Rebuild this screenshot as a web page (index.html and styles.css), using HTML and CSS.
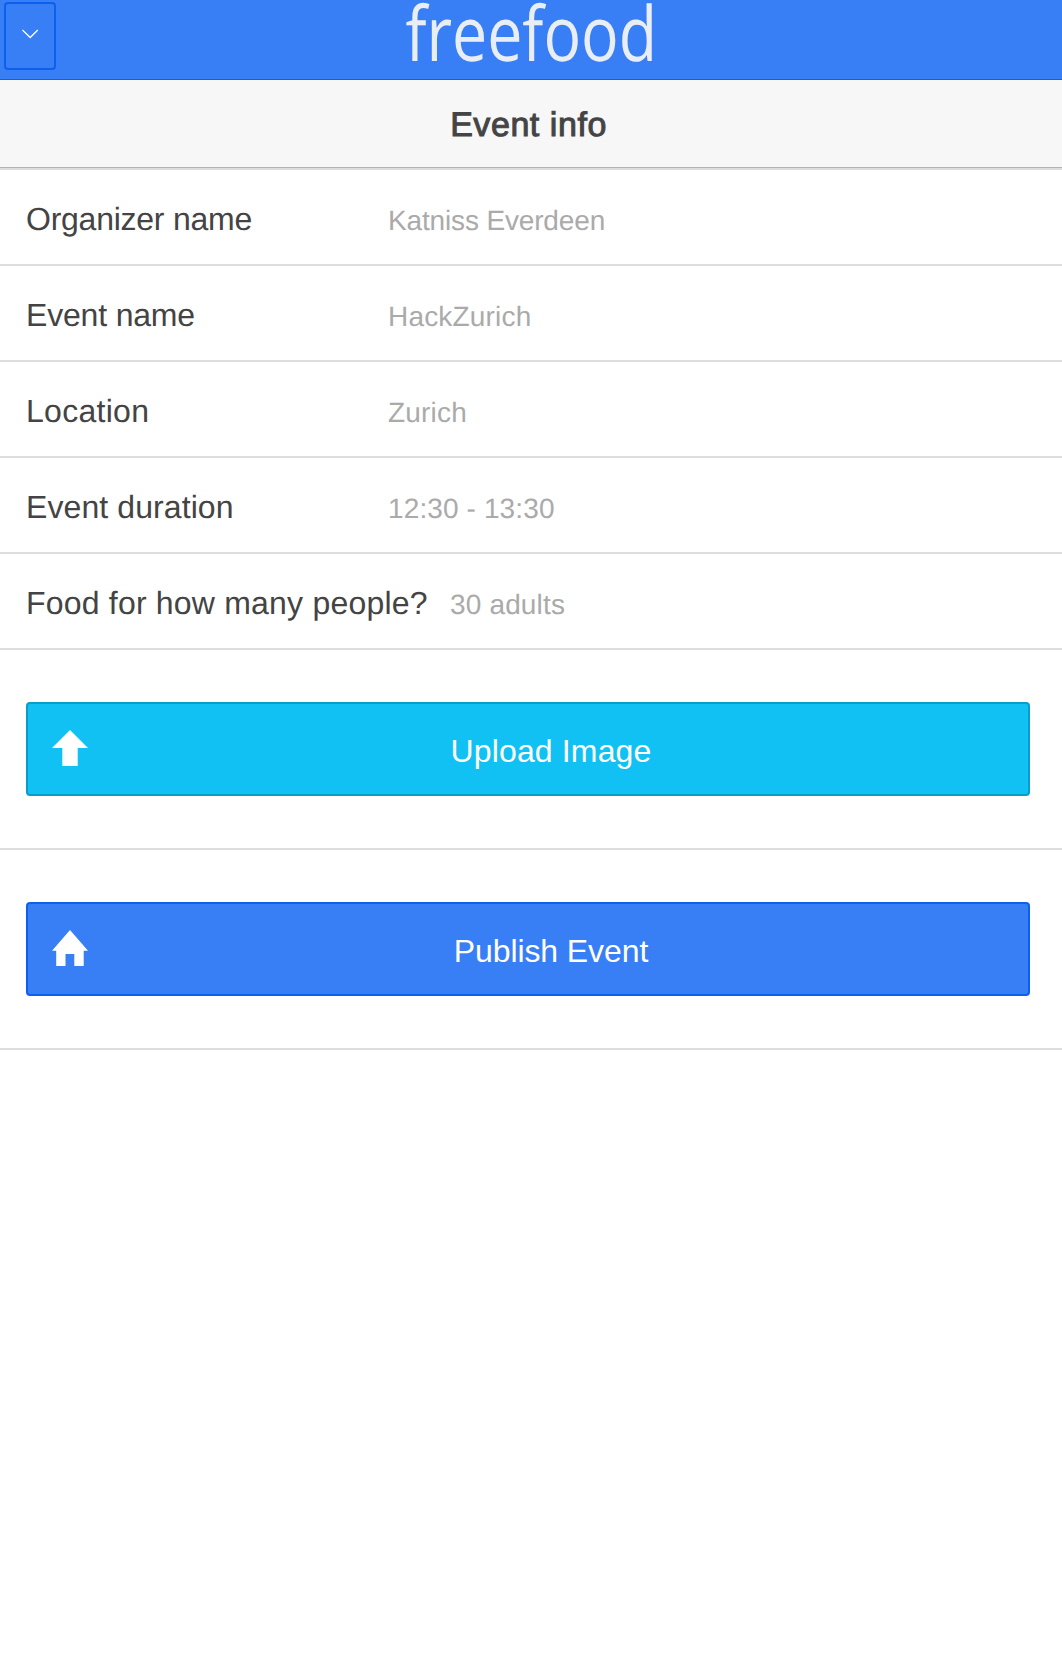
FILE: index.html
```html
<!DOCTYPE html>
<html lang="en">
<head>
<meta charset="utf-8">
<title>freefood</title>
<link rel="stylesheet" href="styles.css">
</head>
<body>
<header class="bar">
  <button class="menu" aria-label="Menu"><svg width="16" height="10" viewBox="0 0 16 10"><path d="M.4 1 8.2 8.6 15.8 1" fill="none" stroke="#fff" stroke-width="1.4"/></svg></button>
  <div class="logo">freefood</div>
</header>
<div class="subbar"><h1 class="title">Event info</h1></div>
<main class="list">
  <div class="item"><span class="label organizer">Organizer name</span><span class="value person">Katniss Everdeen</span></div>
  <div class="item"><span class="label event">Event name</span><span class="value hack">HackZurich</span></div>
  <div class="item"><span class="label location">Location</span><span class="value city">Zurich</span></div>
  <div class="item"><span class="label duration">Event duration</span><span class="value time">12:30 - 13:30</span></div>
  <div class="item"><span class="label people">Food for how many people?</span><span class="value adults">30 adults</span></div>
  <div class="action">
    <button class="button calm"><svg class="icon" width="36" height="36" viewBox="0 0 36 36"><path d="M18 0 36 18H25.7V36H10.3V18H0Z" fill="#fff"/></svg><span class="text upload">Upload Image</span></button>
  </div>
  <div class="action">
    <button class="button positive"><svg class="icon" width="36" height="36" viewBox="0 0 36 36"><path d="M18 0 36 20.7H31.7V36H22.3V24H13.5V36H4.2V20.7H0Z" fill="#fff"/></svg><span class="text publish">Publish Event</span></button>
  </div>
</main>
</body>
</html>
```
FILE: styles.css
```css
* { box-sizing: border-box; }
body {
  margin: 0;
  min-height: 1656px;
  background: #fff;
  color: #444;
  font-family: "Liberation Sans", Arial, sans-serif;
  text-rendering: geometricPrecision;
}
button { font: inherit; color: #fff; }
.bar {
  display: grid;
  grid-template-columns: 52px 1fr 52px;
  height: 80px;
  padding: 2px 4px 0;
  background: #387ef5;
  border-bottom: 1px solid #0c60ee;
}
.menu {
  display: flex;
  align-items: center;
  justify-content: center;
  height: 68px;
  padding: 0 0 4px;
  background: none;
  border: 2px solid #0c60ee;
  border-radius: 4px;
}
.logo {
  justify-self: center;
  height: 76px;
  font: 76px/76px "Open Sans", "Noto Sans", sans-serif;
  color: #e9eef4;
  white-space: nowrap;
  transform: translate(.5px, -7px) scaleX(.824);
}
.subbar {
  display: flex;
  justify-content: center;
  height: 90px;
  background: #f7f7f7;
  border-bottom: 2px solid #ddd;
  box-shadow: inset 0 -1px #b2b2b2;
}
.title {
  margin: 0 5px 0 0;
  font-size: 34px;
  font-weight: 400;
  line-height: 90px;
  letter-spacing: .55px;
  -webkit-text-stroke: 1px #444;
}
.item {
  display: flex;
  align-items: baseline;
  height: 96px;
  padding: 0 26px;
  border-bottom: 2px solid #ddd;
  line-height: 98px;
  white-space: nowrap;
}
.label { width: 362px; font-size: 32px; }
.value { font-size: 28px; color: #aaa; }
.organizer { letter-spacing: -.25px; }
.event { letter-spacing: -.18px; }
.location { letter-spacing: .28px; }
.duration { letter-spacing: .09px; }
.people { width: 424px; letter-spacing: .2px; }
.person { letter-spacing: -.15px; }
.hack { letter-spacing: .18px; }
.city { letter-spacing: .2px; }
.time { letter-spacing: .12px; }
.adults { letter-spacing: .16px; }
.action {
  height: 200px;
  padding: 52px 32px 52px 26px;
  border-bottom: 2px solid #ddd;
}
.button {
  display: grid;
  grid-template-columns: 36px 1fr;
  width: 100%;
  height: 94px;
  padding: 0 0 0 24px;
  align-items: center;
  border: 2px solid;
  border-radius: 4px;
  font-size: 32px;
}
.icon { display: block; margin-bottom: 2px; }
.text { padding: 3px 14px 0 0; line-height: 40px; }
.upload { letter-spacing: .15px; }
.publish { letter-spacing: -.1px; }
.calm { background: #11c1f3; border-color: #0a9dc7; }
.positive { background: #387ef5; border-color: #0c60ee; }
```
